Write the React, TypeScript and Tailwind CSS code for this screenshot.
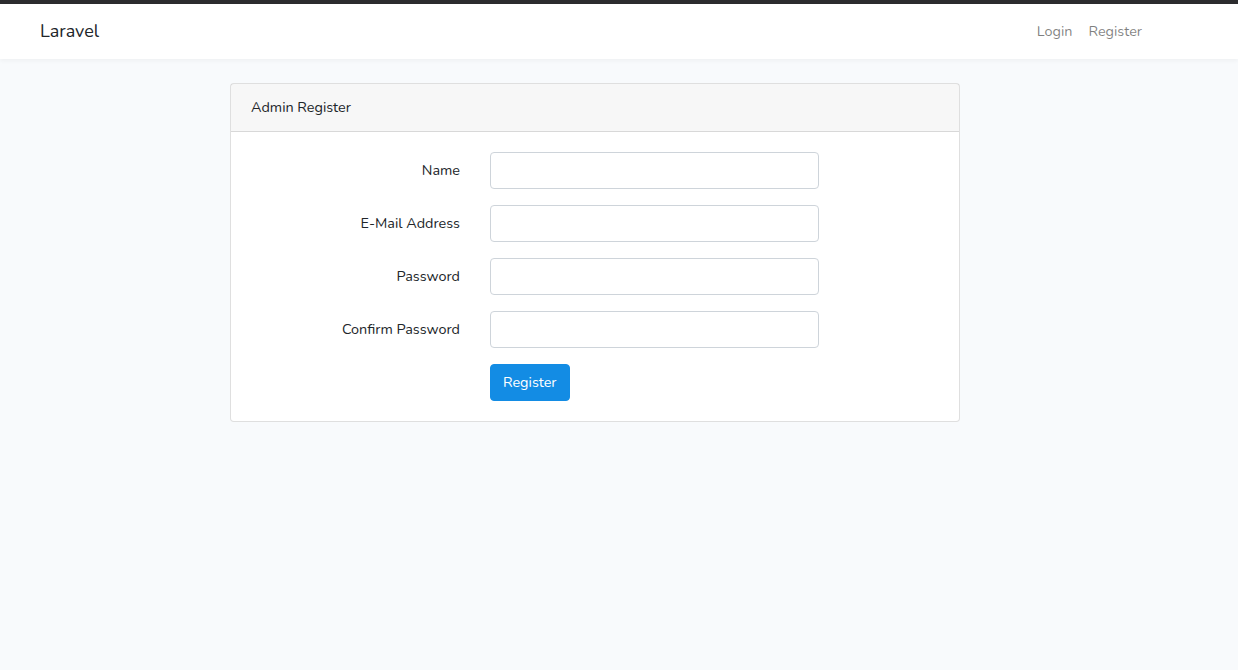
import React from 'react';

const fields = [
  { label: 'Name', type: 'text' },
  { label: 'E-Mail Address', type: 'email' },
  { label: 'Password', type: 'password' },
  { label: 'Confirm Password', type: 'password' },
];

export default function App() {
  return (
    <div className="min-h-[670px] bg-[#f8fafc] text-[#212529] text-[14.4px] leading-[1.6] font-['Nunito','Noto_Sans',sans-serif]">
      <div className="h-[4px] bg-[#2c2c2e]" />

      {/* Navbar */}
      <nav className="bg-white shadow-[0_2px_4px_rgba(0,0,0,0.04)] py-2">
        <div className="w-[1140px] ml-[25px] px-[15px] flex items-center justify-between">
          <a className="text-[18px] leading-[28.8px] py-[5px] text-[#212529]">Laravel</a>
          <div className="flex items-center">
            <a className="px-2 py-2 text-black/50">Login</a>
            <a className="px-2 py-2 text-black/50">Register</a>
          </div>
        </div>
      </nav>

      {/* Main */}
      <main className="py-6">
        <div className="w-[1140px] ml-[25px] px-[15px] flex justify-center">
          <div className="w-[730px] bg-white border border-black/[0.125] rounded-[4px]">
            <div className="px-5 py-3 bg-black/[0.03] border-b border-black/[0.125]">Admin Register</div>
            <form className="p-5 flex flex-col gap-4">
              {fields.map((f) => (
                <div key={f.label} className="flex items-center">
                  <label className="w-[209px] ml-[-15px] mr-[30px] text-right leading-[37px] shrink-0 pl-[15px] box-content">
                    {f.label}
                  </label>
                  <input
                    type={f.type}
                    className="w-[329px] h-[37px] px-3 border border-[#ced4da] rounded-[4px] bg-white outline-none"
                  />
                </div>
              ))}
              <div className="flex">
                <div className="w-[224px] shrink-0 ml-[-15px] mr-[30px]" />
                <button
                  type="button"
                  className="h-[37px] px-3 rounded-[4px] bg-[#138ce4] text-white border border-[#138ce4]"
                >
                  Register
                </button>
              </div>
            </form>
          </div>
        </div>
      </main>
    </div>
  );
}
